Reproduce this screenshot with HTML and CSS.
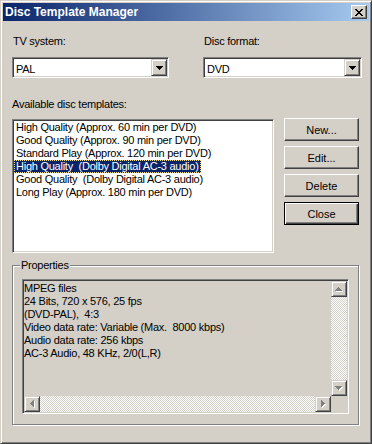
FILE: index.html
```html
<!DOCTYPE html>
<html lang="en">
<head>
    <meta charset="UTF-8">
    <title>Disc Template Manager</title>
    <link rel="stylesheet" href="styles.css">
</head>
<body>
    <div class="window">
        <div class="titlebar">
            <span class="title">Disc Template Manager</span>
            <button class="close-btn">
                <svg width="8" height="7" viewBox="0 0 8 7" shape-rendering="crispEdges"><path fill="#000" d="M0 0h2v1H0zM6 0h2v1H6zM1 1h2v1H1zM5 1h2v1H5zM2 2h4v1H2zM3 3h2v1H3zM2 4h4v1H2zM1 5h2v1H1zM5 5h2v1H5zM0 6h2v1H0zM6 6h2v1H6z"/></svg>
            </button>
        </div>
        <div class="client">
            <div class="selectors">
                <div class="field">
                    <div class="label">TV system:</div>
                    <div class="combo">
                        <span class="combo-value">PAL</span>
                        <span class="drop-btn">
                            <svg width="7" height="4" viewBox="0 0 7 4" shape-rendering="crispEdges"><path fill="#000" d="M0 0h7v1H0zM1 1h5v1H1zM2 2h3v1H2zM3 3h1v1H3z"/></svg>
                        </span>
                    </div>
                </div>
                <div class="field">
                    <div class="label">Disc format:</div>
                    <div class="combo">
                        <span class="combo-value">DVD</span>
                        <span class="drop-btn">
                            <svg width="7" height="4" viewBox="0 0 7 4" shape-rendering="crispEdges"><path fill="#000" d="M0 0h7v1H0zM1 1h5v1H1zM2 2h3v1H2zM3 3h1v1H3z"/></svg>
                        </span>
                    </div>
                </div>
            </div>

            <div class="label list-label">Available disc templates:</div>
            <div class="main-row">
                <div class="listbox">
                    <div class="item"><span>High Quality (Approx. 60 min per DVD)</span></div>
                    <div class="item"><span>Good Quality (Approx. 90 min per DVD)</span></div>
                    <div class="item"><span>Standard Play (Approx. 120 min per DVD)</span></div>
                    <div class="item selected"><span>High Quality  (Dolby Digital AC-3 audio)</span></div>
                    <div class="item"><span>Good Quality  (Dolby Digital AC-3 audio)</span></div>
                    <div class="item"><span>Long Play (Approx. 180 min per DVD)</span></div>
                </div>
                <div class="actions">
                    <button class="btn">New...</button>
                    <button class="btn">Edit...</button>
                    <button class="btn">Delete</button>
                    <button class="btn default">Close</button>
                </div>
            </div>

            <fieldset class="group">
                <legend>Properties</legend>
                <div class="props">
                    <div class="props-text">MPEG files
24 Bits, 720 x 576, 25 fps
(DVD-PAL),  4:3
Video data rate: Variable (Max.  8000 kbps)
Audio data rate: 256 kbps
AC-3 Audio, 48 KHz, 2/0(L,R)</div>
                    <div class="vscroll">
                        <span class="sb-btn">
                            <svg width="8" height="5" viewBox="0 0 8 5" shape-rendering="crispEdges"><path fill="#fff" d="M4 1h1v1H4zM3 2h3v1H3zM2 3h5v1H2zM1 4h7v1H1z"/><path fill="#808080" d="M3 0h1v1H3zM2 1h3v1H2zM1 2h5v1H1zM0 3h7v1H0z"/></svg>
                        </span>
                        <span class="track"></span>
                        <span class="sb-btn">
                            <svg width="8" height="5" viewBox="0 0 8 5" shape-rendering="crispEdges"><path fill="#fff" d="M1 1h7v1H1zM2 2h5v1H2zM3 3h3v1H3zM4 4h1v1H4z"/><path fill="#808080" d="M0 0h7v1H0zM1 1h5v1H1zM2 2h3v1H2zM3 3h1v1H3z"/></svg>
                        </span>
                    </div>
                    <div class="hscroll">
                        <span class="sb-btn">
                            <svg width="5" height="8" viewBox="0 0 5 8" shape-rendering="crispEdges"><path fill="#fff" d="M1 4h1v1H1zM2 3h1v3H2zM3 2h1v5H3zM4 1h1v7H4z"/><path fill="#808080" d="M0 3h1v1H0zM1 2h1v3H1zM2 1h1v5H2zM3 0h1v7H3z"/></svg>
                        </span>
                        <span class="sb-btn">
                            <svg width="5" height="8" viewBox="0 0 5 8" shape-rendering="crispEdges"><path fill="#fff" d="M1 1h1v7H1zM2 2h1v5H2zM3 3h1v3H3zM4 4h1v1H4z"/><path fill="#808080" d="M0 0h1v7H0zM1 1h1v5H1zM2 2h1v3H2zM3 3h1v1H3z"/></svg>
                        </span>
                    </div>
                    <div class="corner"></div>
                </div>
            </fieldset>
        </div>
    </div>
</body>
</html>
```

FILE: styles.css
```css
body {
    margin: 0;
    background: #d4d0c8;
}
.window {
    width: 372px;
    height: 444px;
    box-sizing: border-box;
    border: 1px solid;
    border-color: #d4d0c8 #404040 #404040 #d4d0c8;
    box-shadow: inset 1px 1px #fff, inset -1px -1px #808080;
    padding: 2px;
    background: #d4d0c8;
    font: 11px "Liberation Sans", Arial, sans-serif;
    color: #000;
}
.titlebar {
    height: 18px;
    margin-bottom: 1px;
    padding: 0 2px;
    display: flex;
    align-items: center;
    justify-content: space-between;
    background: linear-gradient(to right, #0a246a, #a6caf0);
    color: #fff;
    font-weight: bold;
    font-size: 12px;
}
.close-btn {
    width: 16px;
    height: 14px;
    padding: 0;
    box-sizing: border-box;
    border: 1px solid;
    border-color: #fff #404040 #404040 #fff;
    box-shadow: inset -1px -1px #808080;
    background: #d4d0c8;
    display: flex;
    align-items: center;
    justify-content: center;
}
.client {
    padding: 13px 9px 0;
    letter-spacing: -0.25px;
}
.selectors {
    display: grid;
    grid-template-columns: 157px 159px;
    column-gap: 34px;
}
.label {
    line-height: 13px;
    padding-left: 1px;
}
/* sunken 3d edge, used by combo, list and text box */
.combo, .listbox, .props {
    box-sizing: border-box;
    border: 1px solid;
    border-color: #808080 #fff #fff #808080;
    box-shadow: inset 1px 1px #404040, inset -1px -1px #d4d0c8;
    padding: 1px;
}
.combo {
    margin-top: 9px;
    height: 21px;
    display: flex;
    background: #fff;
}
.combo-value {
    flex: 1;
    padding: 3px 0 0 2px;
    line-height: 14px;
}
/* raised 3d edge */
.drop-btn, .sb-btn {
    width: 16px;
    height: 17px;
    box-sizing: border-box;
    border: 1px solid;
    border-color: #d4d0c8 #404040 #404040 #d4d0c8;
    box-shadow: inset 1px 1px #fff, inset -1px -1px #808080;
    background: #d4d0c8;
    display: flex;
    align-items: center;
    justify-content: center;
}
.sb-btn {
    height: 16px;
}
.list-label {
    margin-top: 20px;
    padding-left: 0;
}
.main-row {
    display: flex;
    gap: 10px;
    margin-top: 8px;
}
.listbox {
    width: 262px;
    height: 134px;
    background: #fff;
}
.item {
    line-height: 13px;
    white-space: pre;
}
.item span {
    display: inline-block;
    padding: 0 2px;
}
.item.selected span {
    background: #0a246a;
    color: #fff;
    outline: 1px dotted #f0e080;
    outline-offset: -1px;
}
.actions {
    display: flex;
    flex-direction: column;
    gap: 5px;
    margin-top: -1px;
}
.btn {
    width: 75px;
    height: 23px;
    padding: 0;
    box-sizing: border-box;
    border: 1px solid;
    border-color: #fff #404040 #404040 #fff;
    box-shadow: inset -1px -1px #808080;
    background: #d4d0c8;
    font: inherit;
    color: #000;
}
.btn.default {
    border-color: #000;
    box-shadow: inset 1px 1px #fff, inset -1px -1px #404040, inset -2px -2px #808080;
}
.group {
    width: 347px;
    box-sizing: border-box;
    min-width: 0;
    margin: 6px 0 0;
    padding: 7px 9px 10px;
    border: 1px solid #808080;
    box-shadow: inset 1px 1px #fff, 1px 1px #fff;
}
.group legend {
    padding: 0 1px;
    margin-left: -2px;
    line-height: 13px;
    background: #d4d0c8;
}
.props {
    width: 327px;
    height: 135px;
    display: grid;
    grid-template-columns: 1fr 16px;
    grid-template-rows: 1fr 16px;
    background: #d4d0c8;
}
.props-text {
    white-space: pre;
    line-height: 13px;
    padding-top: 1px;
    overflow: hidden;
}
.vscroll, .hscroll {
    display: flex;
    justify-content: space-between;
    background: repeating-conic-gradient(#fff 0 25%, #d4d0c8 0 50%) 0 0 / 2px 2px;
}
.vscroll {
    flex-direction: column;
}
.corner {
    background: #d4d0c8;
}
```
